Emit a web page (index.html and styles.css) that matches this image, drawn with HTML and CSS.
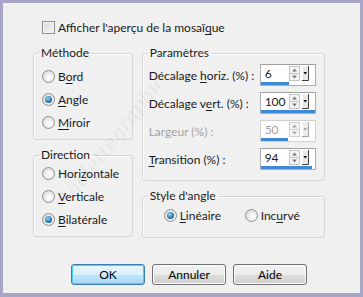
FILE: index.html
```html
<!DOCTYPE html>
<html lang="fr">
<head>
    <meta charset="UTF-8">
    <title>Mosaïque</title>
    <link rel="stylesheet" href="styles.css">
</head>
<body>
    <div class="frame">
        <!-- Aperçu -->
        <div class="check-row">
            <span class="checkbox"></span>
            <span>Afficher l'aperçu de la mosaï<u>q</u>ue</span>
        </div>

        <div class="main">
            <!-- Colonne gauche -->
            <div class="col-left">
                <fieldset class="group methode">
                    <legend>Méthode</legend>
                    <div class="radio-row"><span class="radio"></span><span>B<u>o</u>rd</span></div>
                    <div class="radio-row"><span class="radio checked"></span><span><u>A</u>ngle</span></div>
                    <div class="radio-row"><span class="radio"></span><span><u>M</u>iroir</span></div>
                </fieldset>
                <fieldset class="group direction">
                    <legend>Direction</legend>
                    <div class="radio-row"><span class="radio"></span><span>Hori<u>z</u>ontale</span></div>
                    <div class="radio-row"><span class="radio"></span><span><u>V</u>erticale</span></div>
                    <div class="radio-row"><span class="radio checked"></span><span><u>B</u>ilatérale</span></div>
                </fieldset>
            </div>

            <!-- Colonne droite -->
            <div class="col-right">
                <fieldset class="group params">
                    <legend>Paramètres</legend>
                    <div class="param-row">
                        <span class="param-label">Décalage <u>h</u>oriz. (%) :</span>
                        <div class="spin">
                            <div class="spin-top">
                                <span class="spin-value">6</span>
                                <svg class="spin-arrows" width="11" height="15" viewBox="0 0 11 15"><rect x="0.5" y="0.5" width="10" height="14" fill="#f4f4f4" stroke="#c4c4c4"/><line x1="1" y1="7.5" x2="10" y2="7.5" stroke="#c4c4c4"/><path d="M3 5.5 L5.5 2.5 L8 5.5 Z" fill="#7a7a7a"/><path d="M3 9.5 L5.5 12.5 L8 9.5 Z" fill="#7a7a7a"/></svg>
                                <svg class="spin-drop" width="7" height="15" viewBox="0 0 7 15"><rect x="0" y="0" width="7" height="15" fill="#e8e8e8"/><path d="M0 15 V0 H7" fill="none" stroke="#fff"/><path d="M6.5 0 V14.5 H0" fill="none" stroke="#404040"/><path d="M1.5 6 L5 6 L3.25 8.5 Z" fill="#000"/></svg>
                            </div>
                            <div class="spin-bar" style="width: 28px"></div>
                        </div>
                    </div>
                    <div class="param-row">
                        <span class="param-label">Décalage v<u>e</u>rt. (%) :</span>
                        <div class="spin">
                            <div class="spin-top">
                                <span class="spin-value">100</span>
                                <svg class="spin-arrows" width="11" height="15" viewBox="0 0 11 15"><rect x="0.5" y="0.5" width="10" height="14" fill="#f4f4f4" stroke="#c4c4c4"/><line x1="1" y1="7.5" x2="10" y2="7.5" stroke="#c4c4c4"/><path d="M3 5.5 L5.5 2.5 L8 5.5 Z" fill="#7a7a7a"/><path d="M3 9.5 L5.5 12.5 L8 9.5 Z" fill="#7a7a7a"/></svg>
                                <svg class="spin-drop" width="7" height="15" viewBox="0 0 7 15"><rect x="0" y="0" width="7" height="15" fill="#e8e8e8"/><path d="M0 15 V0 H7" fill="none" stroke="#fff"/><path d="M6.5 0 V14.5 H0" fill="none" stroke="#404040"/><path d="M1.5 6 L5 6 L3.25 8.5 Z" fill="#000"/></svg>
                            </div>
                            <div class="spin-bar" style="width: 54px"></div>
                        </div>
                    </div>
                    <div class="param-row disabled">
                        <span class="param-label">Largeur (%) :</span>
                        <div class="spin">
                            <div class="spin-top">
                                <span class="spin-value">50</span>
                                <svg class="spin-arrows" width="11" height="15" viewBox="0 0 11 15"><rect x="0.5" y="0.5" width="10" height="14" fill="#f4f4f4" stroke="#d0d0d0"/><line x1="1" y1="7.5" x2="10" y2="7.5" stroke="#d0d0d0"/><path d="M3 5.5 L5.5 2.5 L8 5.5 Z" fill="#a8a8a8"/><path d="M3 9.5 L5.5 12.5 L8 9.5 Z" fill="#a8a8a8"/></svg>
                                <svg class="spin-drop" width="7" height="15" viewBox="0 0 7 15"><rect x="0" y="0" width="7" height="15" fill="#ececec"/><path d="M0 15 V0 H7" fill="none" stroke="#fff"/><path d="M6.5 0 V14.5 H0" fill="none" stroke="#a0a0a0"/><path d="M1.5 6 L5 6 L3.25 8.5 Z" fill="#a0a0a0"/></svg>
                            </div>
                            <div class="spin-bar" style="width: 27px"></div>
                        </div>
                    </div>
                    <div class="param-row">
                        <span class="param-label"><u>T</u>ransition (%) :</span>
                        <div class="spin">
                            <div class="spin-top">
                                <span class="spin-value">94</span>
                                <svg class="spin-arrows" width="11" height="15" viewBox="0 0 11 15"><rect x="0.5" y="0.5" width="10" height="14" fill="#f4f4f4" stroke="#c4c4c4"/><line x1="1" y1="7.5" x2="10" y2="7.5" stroke="#c4c4c4"/><path d="M3 5.5 L5.5 2.5 L8 5.5 Z" fill="#7a7a7a"/><path d="M3 9.5 L5.5 12.5 L8 9.5 Z" fill="#7a7a7a"/></svg>
                                <svg class="spin-drop" width="7" height="15" viewBox="0 0 7 15"><rect x="0" y="0" width="7" height="15" fill="#e8e8e8"/><path d="M0 15 V0 H7" fill="none" stroke="#fff"/><path d="M6.5 0 V14.5 H0" fill="none" stroke="#404040"/><path d="M1.5 6 L5 6 L3.25 8.5 Z" fill="#000"/></svg>
                            </div>
                            <div class="spin-bar" style="width: 51px"></div>
                        </div>
                    </div>
                </fieldset>
                <fieldset class="group style-angle">
                    <legend>Style d'angle</legend>
                    <div class="style-row">
                        <div class="radio-row lineaire"><span class="radio checked"></span><span><u>L</u>inéaire</span></div>
                        <div class="radio-row"><span class="radio"></span><span>Inc<u>u</u>rvé</span></div>
                    </div>
                </fieldset>
            </div>
        </div>

        <div class="buttons">
            <button class="btn default">OK</button>
            <button class="btn">Annuler</button>
            <button class="btn">Aide</button>
        </div>

        <span class="watermark">Violettegraphic</span>
    </div>
</body>
</html>
```

FILE: styles.css
```css
/* Fenêtre */
html, body {
    margin: 0;
    padding: 0;
}
body {
    font-family: Lato, "Noto Sans", sans-serif;
    font-size: 12px;
    color: #1a1a1a;
}
.frame {
    position: relative;
    box-sizing: border-box;
    width: 363px;
    height: 297px;
    overflow: hidden;
    background-color: #f0f0f0;
    border-style: solid;
    border-color: #a7a6c6;
    border-width: 3px 3px 4px 3px;
    padding: 18px 35px 0 30px;
}
u { text-decoration-thickness: 1px; text-underline-offset: 2px; }

/* Case à cocher */
.check-row { display: flex; align-items: center; height: 13px; margin-left: 9px; gap: 3px; line-height: 13px; }
.checkbox {
    width: 13px; height: 13px; box-sizing: border-box;
    border: 1px solid #8e8f8f;
    background: linear-gradient(135deg, #dcdcdc, #f6f6f6);
    box-shadow: inset 0 0 0 1px #f4f4f4;
}

/* Groupes */
.main { display: flex; gap: 9px; margin-top: 12px; }
.col-left { width: 100px; display: flex; flex-direction: column; gap: 8px; }
.col-right { width: 184px; display: flex; flex-direction: column; gap: 8px; }
.group {
    margin: 0;
    min-width: 0;
    border: 1px solid #d5d5d5;
    border-radius: 3px;
    box-shadow: inset 1px 1px 0 #fff;
    padding: 0 5px;
}
.group legend { padding: 0 2px; line-height: 14px; font-size: 12px; }
.methode { padding-top: 5px; padding-bottom: 5px; }
.direction { padding-top: 0; padding-bottom: 5px; }
.params { padding-top: 4px; padding-bottom: 10px; }
.style-angle { padding-top: 1px; padding-bottom: 10px; }

/* Boutons radio */
.radio-row { display: flex; align-items: center; height: 23px; gap: 3px; margin-left: 3px; }
.radio {
    position: relative;
    width: 13px; height: 13px; box-sizing: border-box;
    border-radius: 50%;
    border: 1px solid #8f8f8f;
    background: radial-gradient(circle at 60% 60%, #f8f8f8 20%, #d6d6d6 90%);
}
.radio.checked::after {
    content: "";
    position: absolute;
    left: 2px; top: 2px;
    width: 7px; height: 7px;
    border-radius: 50%;
    background: radial-gradient(circle at 40% 35%, #9fd6f5 0%, #2a7bb4 55%, #0f3f6a 100%);
}
.style-row { display: flex; }
.style-row .lineaire { margin-left: 16px; width: 78px; }

/* Paramètres */
.param-row { display: flex; align-items: center; height: 22px; margin-left: 1px; margin-bottom: 6px; }
.param-row:last-child { margin-bottom: 0; }
.param-label { width: 111px; white-space: nowrap; }
.disabled .param-label, .disabled .spin-value { color: #a3a3a3; }
.spin {
    width: 56px; height: 22px; box-sizing: border-box;
    border: 1px solid #abadb3;
    border-top-color: #a0a0a0;
    background-color: #fff;
    display: flex; flex-direction: column;
}
.disabled .spin { border-color: #cfcfcf; }
.spin-top { flex: 1; display: flex; align-items: center; }
.spin-value { flex: 1; padding-left: 4px; line-height: 16px; }
.spin-arrows { margin-right: 2px; }
.spin-drop { margin-right: 6px; }
.spin-bar { height: 3px; background-color: #3b8ad3; }

/* Boutons */
.buttons { display: flex; gap: 7px; margin-top: 26px; margin-left: 38px; }
.btn {
    width: 74px; height: 21px;
    padding: 0;
    font-family: inherit; font-size: 12px; color: #000;
    border: 1px solid #707070;
    border-radius: 3px;
    background: linear-gradient(#f2f2f2 0%, #ebebeb 50%, #dddddd 50%, #cfcfcf 100%);
    box-shadow: inset 0 0 0 1px #fcfcfc;
}
.btn.default {
    border-color: #3c7fb1;
    background: linear-gradient(#eaf6fd 0%, #d9f0fc 50%, #bee6fd 50%, #a7d9f5 100%);
    box-shadow: inset 0 0 0 1px #48d0f8;
}

/* Filigrane */
.watermark {
    position: absolute;
    left: 62px; top: 185px;
    font-family: "DejaVu Serif", serif;
    font-style: italic;
    font-size: 20px;
    color: rgba(0, 0, 0, 0.06);
    transform: rotate(-52deg);
    transform-origin: left center;
    pointer-events: none;
    white-space: nowrap;
}
```
